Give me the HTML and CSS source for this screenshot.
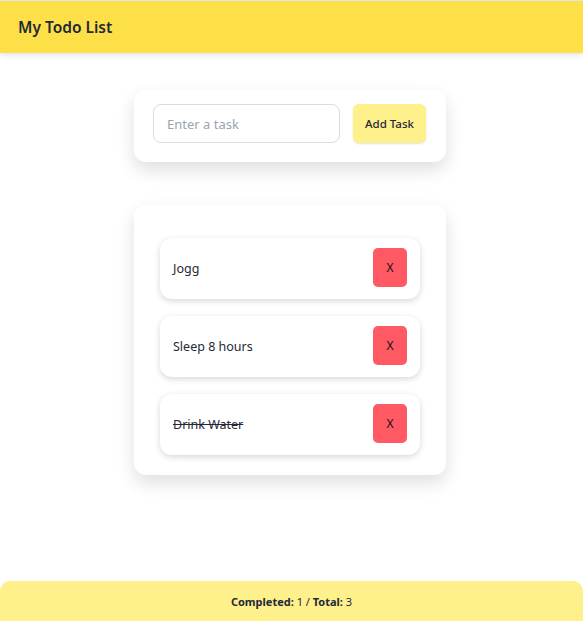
FILE: index.html
```html
<!DOCTYPE html>
<html lang="en">
<head>
<meta charset="utf-8">
<title>My Todo List</title>
<link rel="stylesheet" href="styles.css">
</head>
<body>
<div class="page">
  <header class="topbar">
    <h1 class="title">My Todo List</h1>
  </header>
  <main class="main">
    <section class="card add-card">
      <input class="task-input" type="text" placeholder="Enter a task">
      <button class="add-btn">Add Task</button>
    </section>
    <section class="card list-card">
      <ul class="todo-list">
        <li class="todo-item"><span class="todo-text">Jogg</span><button class="del-btn">X</button></li>
        <li class="todo-item"><span class="todo-text">Sleep 8 hours</span><button class="del-btn">X</button></li>
        <li class="todo-item"><span class="todo-text done">Drink Water</span><button class="del-btn">X</button></li>
      </ul>
    </section>
  </main>
  <footer class="footer">
    <p class="stats"><strong>Completed:</strong> 1 / <strong>Total:</strong> 3</p>
  </footer>
</div>
</body>
</html>
```
FILE: styles.css
```css
* { box-sizing: border-box; }
html, body { margin: 0; padding: 0; }
body {
  font-family: "Noto Sans", "Open Sans", sans-serif;
  color: #1f2937;
  background: #ffffff;
}
.page {
  min-height: 100vh;
  display: flex;
  flex-direction: column;
}
.topbar {
  height: 53px;
  background: #fde047;
  border-top: 1px solid #e4e4e4;
  box-shadow: 0 2px 6px rgba(0,0,0,0.12);
  display: flex;
  align-items: center;
  padding: 0 18px;
}
.title {
  margin: 0;
  font-size: 15.5px;
  font-weight: 600;
}
.main {
  display: flex;
  flex-direction: column;
  align-items: center;
  padding-top: 37px;
  padding-right: 3px;
  gap: 43px;
}
.card {
  width: 312px;
  background: #fff;
  border-radius: 12px;
  box-shadow: 0 8px 18px rgba(0,0,0,0.13);
}
.add-card {
  display: flex;
  gap: 13px;
  padding: 14px 20px 19px 19px;
}
.task-input {
  width: 187px;
  height: 39px;
  border: 1px solid #dcdcdc;
  border-radius: 8px;
  padding: 0 13px;
  font-family: inherit;
  font-size: 13px;
  color: #1f2937;
}
.task-input::placeholder { color: #9ca3af; }
.add-btn {
  width: 73px;
  height: 39px;
  border: none;
  border-radius: 6px;
  background: #fef08a;
  box-shadow: 0 1px 2px rgba(0,0,0,0.12);
  font-family: inherit;
  font-size: 11.5px;
  font-weight: 500;
  color: #1f2937;
}
.list-card {
  padding: 33px 26px 20px;
}
.todo-list {
  list-style: none;
  margin: 0;
  padding: 0;
  display: flex;
  flex-direction: column;
  gap: 17px;
}
.todo-item {
  height: 61px;
  border-radius: 12px;
  background: #fff;
  box-shadow: 0 2px 6px rgba(0,0,0,0.16);
  display: flex;
  align-items: center;
  justify-content: space-between;
  padding: 0 13px;
  font-size: 12.5px;
}
.todo-text.done { text-decoration: line-through; }
.del-btn {
  width: 34px;
  height: 39px;
  border: none;
  border-radius: 5px;
  background: #ff5a63;
  color: #111;
  font-family: inherit;
  font-size: 12px;
  margin-top: -2px;
}
.footer {
  margin-top: auto;
  height: 40px;
  background: #fef08a;
  border-radius: 10px 10px 0 0;
  display: flex;
  align-items: center;
  justify-content: center;
}
.stats {
  margin: 0;
  font-size: 11px;
}
.stats strong { font-weight: 700; }
```
